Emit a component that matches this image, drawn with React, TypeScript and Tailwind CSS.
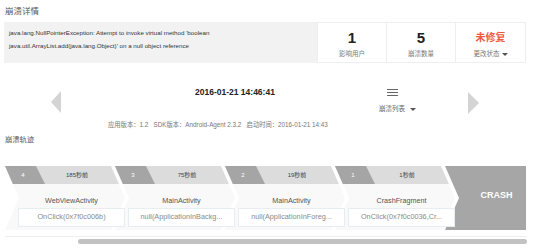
import React from 'react'

interface TrailStep {
  index: string
  ago: string
  title: string
  detail: string
}

const trail: TrailStep[] = [
  { index: '4', ago: '185秒前', title: 'WebViewActivity', detail: 'OnClick(0x7f0c006b)' },
  { index: '3', ago: '75秒前', title: 'MainActivity', detail: 'null(ApplicationInBackg...' },
  { index: '2', ago: '19秒前', title: 'MainActivity', detail: 'null(ApplicationInForeg...' },
  { index: '1', ago: '1秒前', title: 'CrashFragment', detail: 'OnClick(0x7f0c0036,Cr...' },
]

const stats = [
  { value: '1', label: '影响用户' },
  { value: '5', label: '崩溃数量' },
]

function Caret() {
  return <span className="inline-block w-0 h-0 border-x-[3px] border-x-transparent border-t-[3px] border-t-[#555]" />
}

function Step({ step }: { step: TrailStep }) {
  return (
    <div className="relative w-[120px] h-[64px] shrink-0 -ml-[10px] first:ml-0">
      {/* chevron background */}
      <div className="absolute inset-0 flex flex-col [clip-path:polygon(0_0,106px_0,120px_50%,106px_100%,0_100%,14px_50%)]">
        <div className="h-[18px] bg-[#dcdcdc]">
          <div className="w-[40px] h-full bg-[#a5a5a5] [clip-path:polygon(0_0,31px_0,40px_100%,0_100%)]" />
        </div>
        <div className="flex-1 bg-[#f9f9f9]" />
      </div>
      <div className="relative z-10 flex flex-col">
        <div className="flex h-[18px] items-center text-[6px]">
          <span className="w-[36px] text-center text-white">{step.index}</span>
          <span className="flex-1 text-center pr-[12px] text-[#444]">{step.ago}</span>
        </div>
        <div className="mt-[12px] pl-[13px] text-center text-[7.2px] leading-[10px] text-[#555]">{step.title}</div>
        <div className="ml-[13px] mt-[2px] w-[107px] h-[19px] bg-white border border-[#e6eef2] flex items-center justify-center text-[7.3px] text-[#8a8a8a] whitespace-nowrap">
          {step.detail}
        </div>
      </div>
    </div>
  )
}

export default function App() {
  return (
    <div className="w-[534px] h-[251px] overflow-hidden bg-white font-['Liberation_Sans','Noto_Sans_CJK_SC',sans-serif]">
      <div className="h-[22px] flex items-center pl-[5px] text-[8.5px] text-[#555]">崩溃详情</div>

      <div className="flex h-[41px] ml-[4px] mr-[8px]">
        <div className="flex-1 bg-[#f2f2f2] pl-[5px] pt-[4px] text-[6.2px] leading-[13px] text-[#333] whitespace-nowrap">
          <div>java.lang.NullPointerException: Attempt to invoke virtual method 'boolean</div>
          <div>java.util.ArrayList.add(java.lang.Object)' on a null object reference</div>
        </div>
        <div className="flex border border-[#eeeeee] bg-white">
          {stats.map((s) => (
            <div key={s.label} className="w-[69px] flex flex-col items-center border-r border-[#eeeeee]">
              <div className="pt-[7px] text-[15px] font-bold leading-[16px] text-[#222]">{s.value}</div>
              <div className="mt-[4px] text-[6.5px] leading-[8px] text-[#777]">{s.label}</div>
            </div>
          ))}
          <div className="w-[69px] flex flex-col items-center">
            <div className="pt-[7px] text-[10px] font-bold leading-[16px] text-[#ef5a3e]">未修复</div>
            <div className="mt-[4px] flex items-center gap-[2px] text-[6.5px] leading-[8px] text-[#777]">
              更改状态 <Caret />
            </div>
          </div>
        </div>
      </div>

      <div className="flex">
        <div className="pl-[51px] pt-[28px]">
          <div className="w-0 h-0 border-y-[11.5px] border-y-transparent border-r-[10px] border-r-[#d4d4d4]" />
        </div>
        <div className="w-[407px] flex flex-col">
          <div className="flex">
            <div className="w-[318px] pl-[134px] pt-[23px] text-[8.5px] font-bold leading-[12px] text-[#222] whitespace-nowrap">
              2016-01-21 14:46:41
            </div>
            <div className="flex flex-col items-start pt-[26px]">
              <svg width="11" height="7" viewBox="0 0 11 7" className="ml-[8px]">
                <rect x="0" y="0" width="11" height="1" fill="#666" />
                <rect x="0" y="3" width="11" height="1" fill="#666" />
                <rect x="0" y="6" width="11" height="1" fill="#666" />
              </svg>
              <div className="mt-[8px] flex items-center gap-[5px] text-[6.5px] leading-[10px] text-[#666]">
                崩溃列表 <Caret />
              </div>
            </div>
          </div>
          <div className="mt-[6px] pl-[47px] text-[6.3px] leading-[10px] text-[#777] whitespace-nowrap">
            应用版本：1.2&nbsp;&nbsp;&nbsp;SDK版本：Android-Agent 2.3.2&nbsp;&nbsp;&nbsp;启动时间：2016-01-21 14:43
          </div>
        </div>
        <div className="pt-[29px]">
          <div className="w-0 h-0 border-y-[11px] border-y-transparent border-l-[11px] border-l-[#d4d4d4]" />
        </div>
      </div>

      <div className="mt-[5px] pl-[5px] text-[7.3px] leading-[10px] text-[#555]">崩溃轨迹</div>

      <div className="mt-[21px] flex pl-[5px] h-[64px]">
        {trail.map((s) => (
          <Step key={s.index} step={s} />
        ))}
        <div className="-ml-[10px] w-[81px] h-[64px] shrink-0 bg-[#a6a6a6] [clip-path:polygon(0_0,100%_0,100%_100%,0_100%,14px_50%)] flex items-center justify-center pl-[22px] pb-[4px] text-[9px] font-bold text-white">
          CRASH
        </div>
      </div>

      <div className="mt-[6px] ml-[5px] w-[522px] h-[8px] border-t border-[#eeeeee] pt-[2px]">
        <div className="ml-[73px] h-[5px] rounded-full bg-[#c2c2c2]" />
      </div>
    </div>
  )
}
